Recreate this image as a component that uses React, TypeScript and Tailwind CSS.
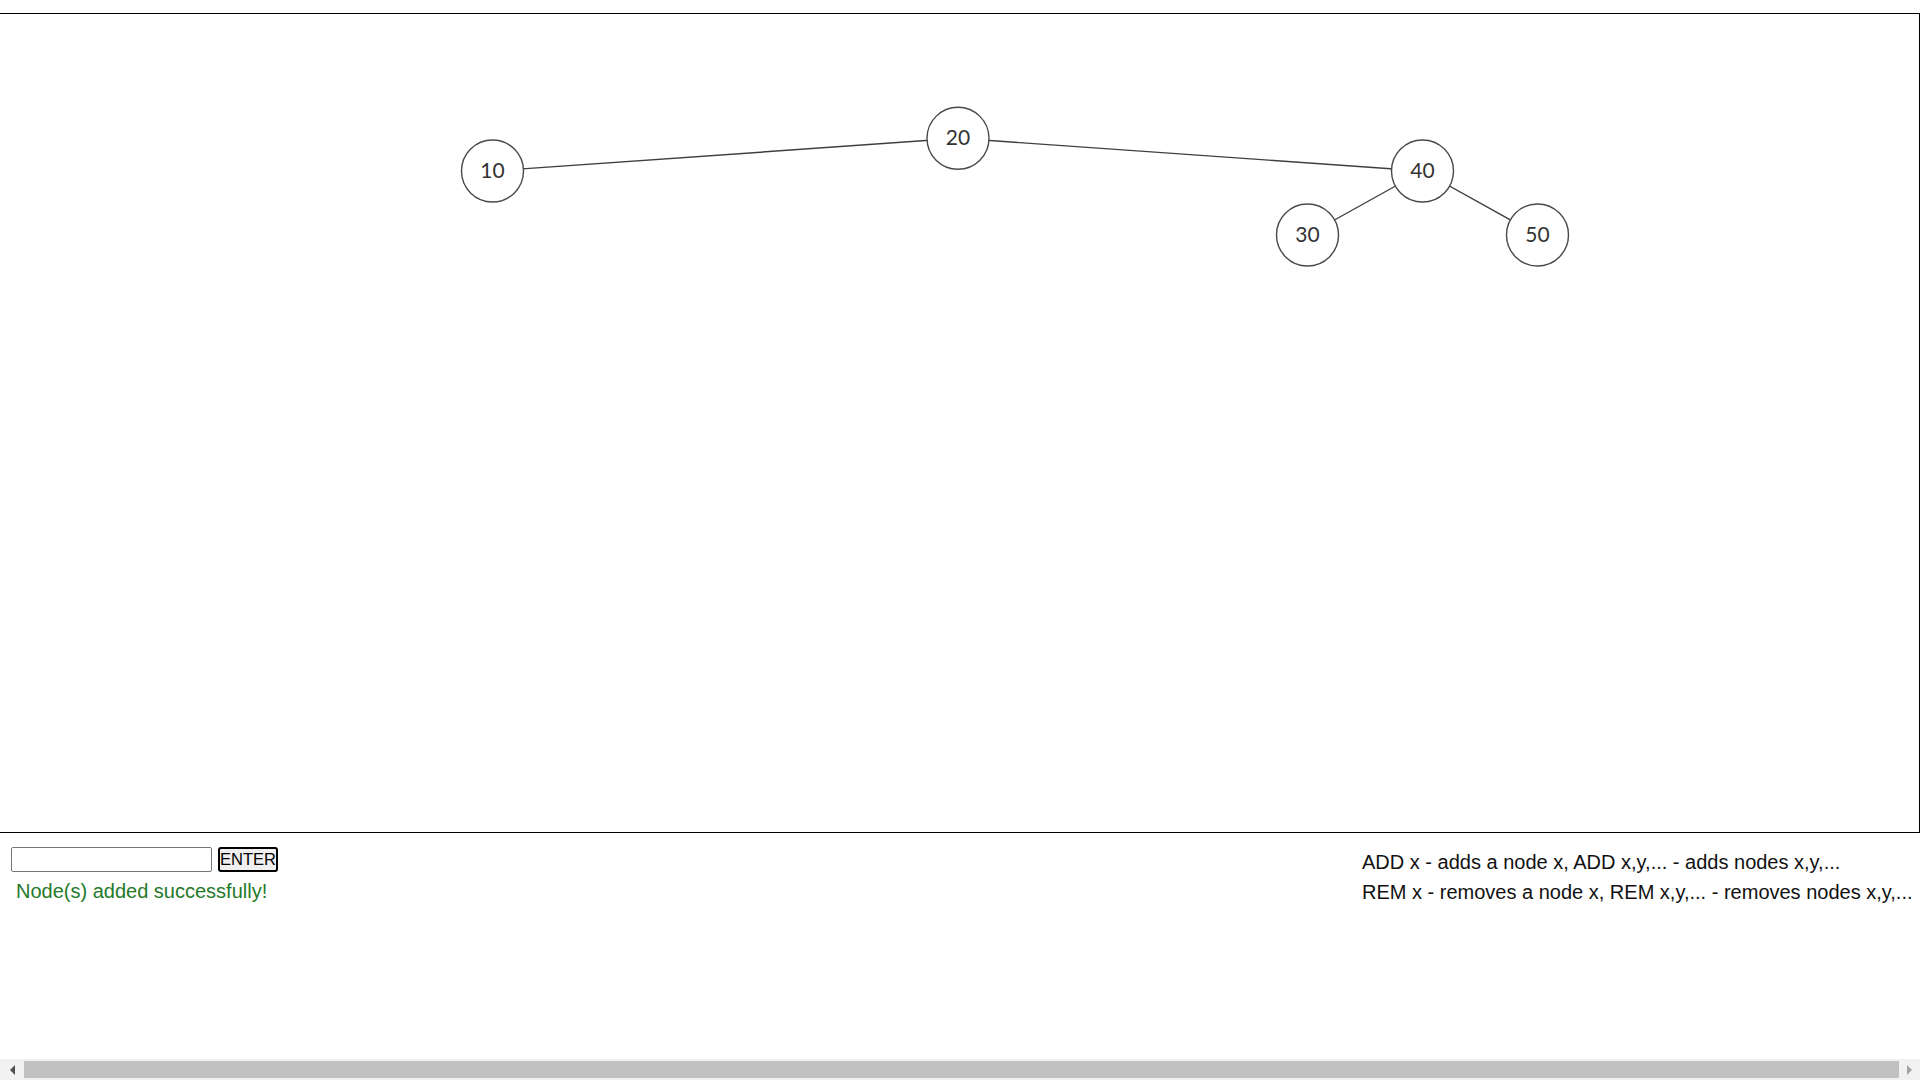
import { useState } from "react";

type TreeNode = { id: number; x: number; y: number };

// positions are in canvas space (canvas content starts at page y=14)
const nodes: TreeNode[] = [
  { id: 10, x: 492.5, y: 157 },
  { id: 20, x: 958, y: 124.3 },
  { id: 40, x: 1422.5, y: 157 },
  { id: 30, x: 1307.5, y: 221 },
  { id: 50, x: 1537.5, y: 221 },
];

const edges: [number, number][] = [
  [20, 10],
  [20, 40],
  [40, 30],
  [40, 50],
];

function TreeCanvas() {
  const byId = (id: number) => nodes.find((n) => n.id === id)!;
  return (
    <svg width="1920" height="818" className="block">
      {edges.map(([a, b]) => {
        const from = byId(a);
        const to = byId(b);
        return (
          <line
            key={`${a}-${b}`}
            x1={from.x}
            y1={from.y}
            x2={to.x}
            y2={to.y}
            stroke="#3f3f3f"
            strokeWidth="1.4"
          />
        );
      })}
      {nodes.map((n) => (
        <g key={n.id}>
          <circle cx={n.x} cy={n.y} r="31" fill="#fff" stroke="#4a4a4a" strokeWidth="1.4" />
          <text
            x={n.x}
            y={n.y + 6.5}
            textAnchor="middle"
            fontFamily="Lato, 'Open Sans', sans-serif"
            fontSize="21"
            fill="#333"
          >
            {n.id}
          </text>
        </g>
      ))}
    </svg>
  );
}

export default function App() {
  const [value, setValue] = useState("");

  return (
    <div className="w-[1920px] h-screen overflow-hidden bg-white flex flex-col font-['Liberation_Sans',Arial,sans-serif]">
      <div className="pt-[13px]">
        <div className="-ml-px w-[1921px] h-[820px] border border-black">
          <TreeCanvas />
        </div>
      </div>

      <div className="flex-1 flex">
        <div className="pl-[11px] pt-[14px]">
          <div className="flex items-center gap-[6px]">
            <input
              value={value}
              onChange={(e) => setValue(e.target.value)}
              className="w-[201px] h-[25px] border border-[#767676] rounded-[2px] px-1 text-[17px] outline-none"
            />
            <button className="h-[25px] w-[60px] border-2 border-black rounded-[3px] bg-[#efefef] text-[16.5px] leading-none text-black flex items-center justify-center">
              ENTER
            </button>
          </div>
          <div className="mt-[8px] pl-[5px] text-[20px] leading-[23px] text-[#257a2a]">
            Node(s) added successfully!
          </div>
        </div>

        <div className="ml-auto w-[558px] pt-[14px] text-[20px] leading-[30px] text-[#111]">
          <div>ADD x - adds a node x, ADD x,y,... - adds nodes x,y,...</div>
          <div>REM x - removes a node x, REM x,y,... - removes nodes x,y,...</div>
        </div>
      </div>

      <div className="h-[21px] bg-[#f1f1f1] flex items-center">
        <div className="w-[24px] h-full flex items-center justify-center">
          <div className="w-0 h-0 border-y-[5px] border-y-transparent border-r-[5px] border-r-[#505050]" />
        </div>
        <div className="flex-1 h-[17px] bg-[#c1c1c1]" />
        <div className="w-[21px] h-full flex items-center justify-center">
          <div className="w-0 h-0 border-y-[5px] border-y-transparent border-l-[5px] border-l-[#a3a3a3]" />
        </div>
      </div>
    </div>
  );
}
